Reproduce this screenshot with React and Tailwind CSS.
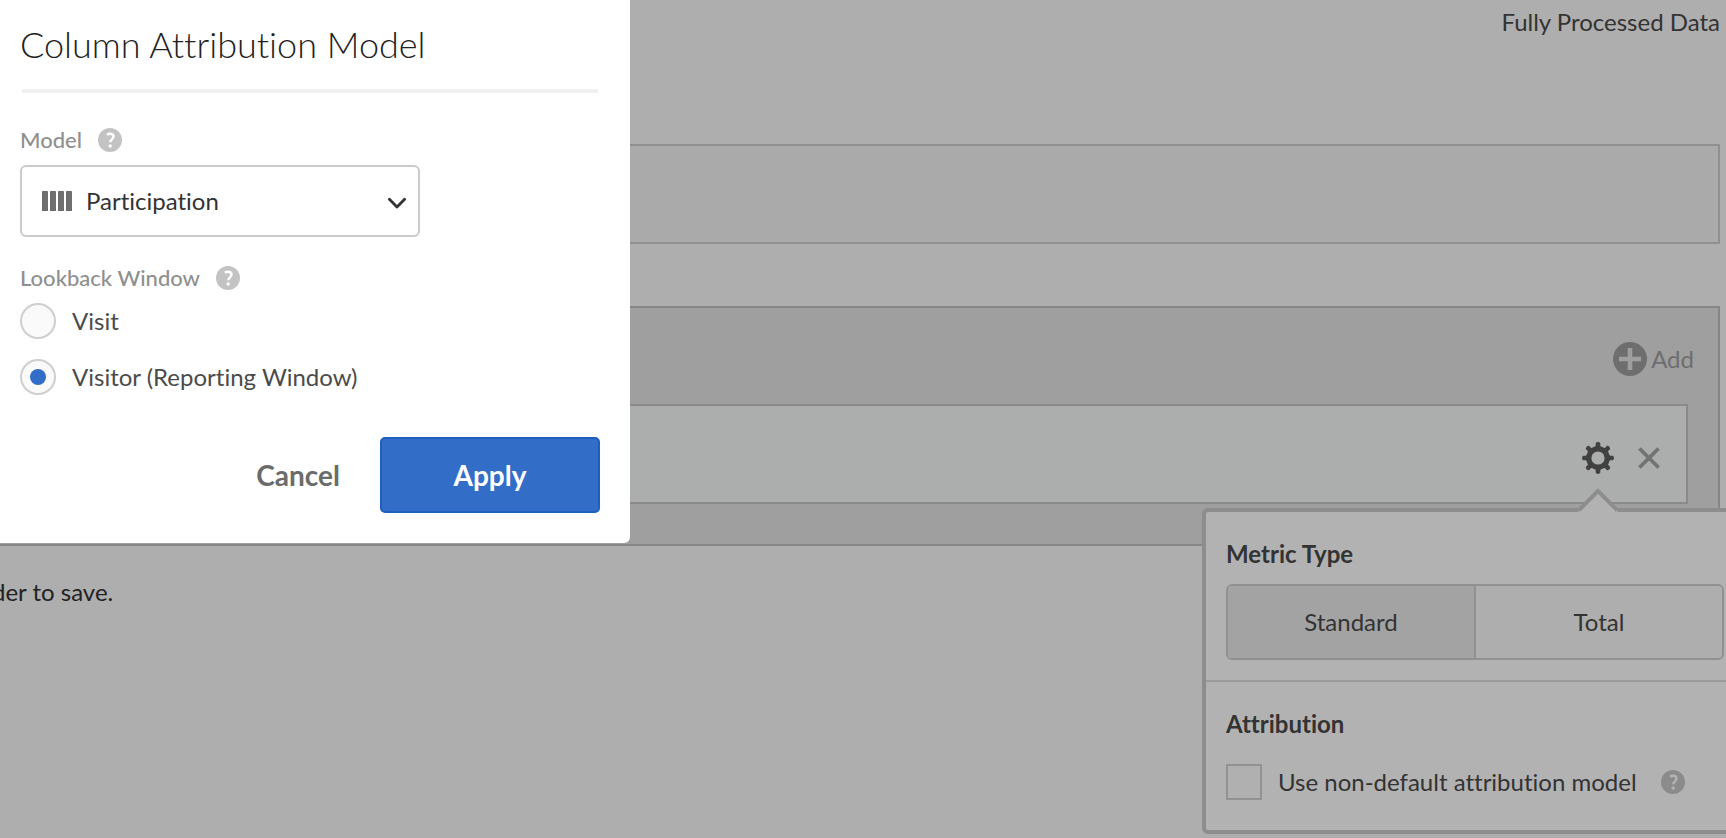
import React, { useState } from "react";

function HelpIcon({ className }) {
  return (
    <svg viewBox="0 0 24 24" className={className} aria-hidden="true">
      <circle cx="12" cy="12" r="12" fill="currentColor" />
      <path
        d="M8.9 6.6C10 5.9 11 5.7 12.1 5.7c2 0 3.4 1.1 3.4 2.9 0 2.6-3.3 2.9-3.2 5.6"
        fill="none"
        stroke="var(--mark)"
        strokeWidth="2.5"
      />
      <circle cx="12.2" cy="18" r="1.7" fill="var(--mark)" />
    </svg>
  );
}

function GearIcon() {
  const teeth = [0, 45, 90, 135, 180, 225, 270, 315];
  return (
    <svg viewBox="-16 -16 32 32" className="size-8" aria-hidden="true">
      <circle r="9.2" fill="none" stroke="currentColor" strokeWidth="5.2" />
      {teeth.map((a) => (
        <path
          key={a}
          d="M-4.4-9.6L-2.3-12V-14.6Q-2.1-16 0-16Q2.1-16 2.3-14.6V-12L4.4-9.6Z"
          fill="currentColor"
          transform={`rotate(${a})`}
        />
      ))}
    </svg>
  );
}

function MetricPopover() {
  const [type, setType] = useState("Standard");
  return (
    <section
      aria-label="Metric settings"
      className="absolute top-full -right-[60px] mt-1.5 w-[544px] rounded-md border-4 border-[#8d8d8d] bg-[#b2b2b2] text-[#333]"
    >
      <svg
        viewBox="0 0 40 24"
        className="absolute -top-6 left-[372px] h-6 w-10"
        aria-hidden="true"
      >
        <path d="M0 24L20 4L40 24Z" fill="#b2b2b2" />
        <path d="M1 22L20 3L39 22" fill="none" stroke="#8d8d8d" strokeWidth="4" />
      </svg>
      <div className="border-b-2 border-[#9b9b9b] pt-[26px] pr-[18px] pb-5 pl-5">
        <h2 className="text-2xl leading-8 font-bold">Metric Type</h2>
        <div className="mt-3.5 flex h-[76px] overflow-hidden rounded-md border-2 border-[#919191]">
          {["Standard", "Total"].map((t) => (
            <button
              key={t}
              type="button"
              aria-pressed={type === t}
              onClick={() => setType(t)}
              className={
                "flex-1 text-2xl leading-8 first:border-r-2 first:border-[#919191] " +
                (type === t ? "bg-[#a3a3a3]" : "bg-[#aeaeae]")
              }
            >
              {t}
            </button>
          ))}
        </div>
      </div>
      <div className="px-5 pt-[26px] pb-[30px]">
        <h2 className="text-2xl leading-8 font-bold">Attribution</h2>
        <div className="mt-6 flex items-center">
          <input
            id="non-default"
            type="checkbox"
            className="size-9 appearance-none border-2 border-[#929292] bg-[#b0b0b0] checked:bg-[#6f6f6f]"
          />
          <label htmlFor="non-default" className="ml-4 text-2xl leading-8">
            Use non-default attribution model
          </label>
          <HelpIcon className="ml-6 size-6 text-[#8b8b8b] [--mark:#b2b2b2]" />
        </div>
      </div>
    </section>
  );
}

function AttributionDialog() {
  const [lookback, setLookback] = useState("visitor");
  const options = [
    ["visit", "Visit"],
    ["visitor", "Visitor (Reporting Window)"],
  ];
  return (
    <form
      role="dialog"
      aria-labelledby="dialog-title"
      onSubmit={(e) => e.preventDefault()}
      className="absolute top-0 left-0 w-[630px] rounded-br-md bg-white pt-5 pr-[30px] pb-[30px] pl-5"
    >
      <h1 id="dialog-title" className="text-4xl leading-12 font-light text-[#222]">
        Column Attribution Model
      </h1>
      <hr className="mt-[21px] mr-0.5 ml-0.5 border-t-4 border-[#f1f1f1]" />
      <div className="mt-[31px] flex items-center text-[#8f8f8f]">
        <label htmlFor="model" className="text-[22px] leading-8 font-medium">
          Model
        </label>
        <HelpIcon className="ml-4 size-6 text-[#c3c3c3] [--mark:#fff]" />
      </div>
      <div className="relative mt-[9px] w-[400px] text-[#333]">
        <select
          id="model"
          className="h-[72px] w-full appearance-none rounded-md border-2 border-[#cbcbcb] bg-white pl-16 text-2xl"
        >
          <option>Participation</option>
        </select>
        <svg
          viewBox="0 0 30 20"
          className="pointer-events-none absolute top-[26px] left-[22px] h-5 w-[30px] text-[#6e6e6e]"
          fill="currentColor"
          aria-hidden="true"
        >
          <rect x="0" width="6" height="20" rx="0.6" />
          <rect x="8" width="6" height="20" rx="0.6" />
          <rect x="16" width="6" height="20" rx="0.6" />
          <rect x="24" width="6" height="20" rx="0.6" />
        </svg>
        <svg
          viewBox="0 0 20 12"
          className="pointer-events-none absolute top-8 right-[13px] h-3 w-5"
          fill="none"
          stroke="currentColor"
          strokeWidth="2.8"
          strokeLinecap="round"
          strokeLinejoin="round"
          aria-hidden="true"
        >
          <path d="M2.4 2.2L10 10L17.6 2.2" />
        </svg>
      </div>
      <fieldset className="mt-[25px]">
        <legend className="flex items-center text-[#8f8f8f]">
          <span className="text-[22px] leading-8 font-medium">Lookback Window</span>
          <HelpIcon className="ml-4 size-6 text-[#c3c3c3] [--mark:#fff]" />
        </legend>
        <div className="mt-[9px] flex flex-col gap-5">
          {options.map(([value, label]) => (
            <div key={value} className="flex items-center">
              <input
                type="radio"
                id={value}
                name="lookback"
                checked={lookback === value}
                onChange={() => setLookback(value)}
                className="grid size-9 appearance-none place-items-center rounded-full border-2 border-[#cfcfcf] bg-[#fafafa] before:size-4 before:rounded-full checked:before:bg-[#326dc8]"
              />
              <label htmlFor={value} className="ml-4 text-2xl leading-8 text-[#4b4b4b]">
                {label}
              </label>
            </div>
          ))}
        </div>
      </fieldset>
      <div className="mt-[42px] flex justify-end gap-10">
        <button type="button" className="text-[28px] leading-9 font-bold text-[#6b6b6b]">
          Cancel
        </button>
        <button
          type="submit"
          className="h-[76px] w-[220px] rounded-[5px] border-2 border-[#1f5fc0] bg-[#326dc8] text-[28px] leading-9 font-bold text-white"
        >
          Apply
        </button>
      </div>
    </form>
  );
}

export default function App() {
  return (
    <div className="relative min-h-screen overflow-hidden bg-[#aeaeae] font-['Lato',sans-serif] [font-variant-ligatures:no-common-ligatures]">
      <main className="pr-1.5">
        <p className="pt-1.5 text-right text-2xl leading-8 text-[#333]">Fully Processed Data</p>
        <div className="mt-[106px] h-[100px] border-2 border-l-0 border-[#909090] bg-[#aaaaaa]" />
        <section className="mt-[62px] h-60 border-2 border-l-0 border-[#868686] bg-[#9f9f9f] pr-[30px]">
          <div className="-mr-1.5 flex h-24 justify-end pt-[34px]">
            <button type="button" className="flex h-[34px] items-center gap-1 text-2xl leading-8 text-[#6e6e6e]">
              <svg viewBox="0 0 34 34" className="size-[34px]" aria-hidden="true">
                <circle cx="17" cy="17" r="17" fill="currentColor" />
                <path d="M17 6v22M6 17h22" stroke="#9f9f9f" strokeWidth="4.6" />
              </svg>
              Add
            </button>
          </div>
          <div className="relative flex h-[100px] items-center justify-end gap-6 border-2 border-l-0 border-[#8a8a8a] bg-[#abaeac] pt-2 pr-[26px]">
            <button type="button" aria-label="Metric settings" className="text-[#404140]">
              <GearIcon />
            </button>
            <button type="button" aria-label="Remove" className="text-[#737373]">
              <svg viewBox="0 0 22 22" className="size-[22px]" aria-hidden="true">
                <path d="M1.5 1.5L20.5 20.5M20.5 1.5L1.5 20.5" stroke="currentColor" strokeWidth="3.8" />
              </svg>
            </button>
            <MetricPopover />
          </div>
        </section>
        <p className="mt-[30px] text-2xl leading-8 text-[#222]">
          <span className="-ml-2">der to save.</span>
        </p>
      </main>
      <AttributionDialog />
    </div>
  );
}
